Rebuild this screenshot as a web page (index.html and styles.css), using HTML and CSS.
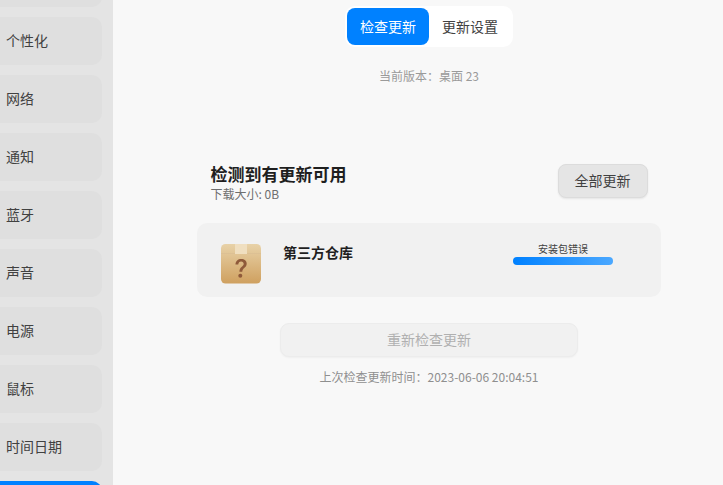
FILE: index.html
```html
<!DOCTYPE html>
<html lang="zh-CN">
<head>
  <meta charset="UTF-8">
  <title>系统更新</title>
  <link rel="stylesheet" href="styles.css">
</head>
<body>
  <div class="app">
    <div class="sidebar">
      <div class="nav-item"></div>
      <div class="nav-item">个性化</div>
      <div class="nav-item">网络</div>
      <div class="nav-item">通知</div>
      <div class="nav-item">蓝牙</div>
      <div class="nav-item">声音</div>
      <div class="nav-item">电源</div>
      <div class="nav-item">鼠标</div>
      <div class="nav-item">时间日期</div>
      <div class="nav-item active"></div>
    </div>
    <div class="main">
      <div class="tabs">
        <div class="tab active">检查更新</div>
        <div class="tab">更新设置</div>
      </div>
      <div class="version">当前版本：桌面 23</div>
      <div class="update-head">
        <div>
          <div class="update-title">检测到有更新可用</div>
          <div class="update-size">下载大小: 0B</div>
        </div>
        <button class="btn-all">全部更新</button>
      </div>
      <div class="card">
        <svg class="pkg-icon" width="42" height="42" viewBox="0 0 42 42">
          <defs>
            <linearGradient id="box" x1="0" y1="0" x2="0" y2="1">
              <stop offset="0" stop-color="#e8d2a8"/>
              <stop offset="1" stop-color="#cfa05f"/>
            </linearGradient>
          </defs>
          <rect x="1" y="1" width="40" height="39.500" rx="4.500" fill="url(#box)"/>
          <rect x="1" y="10" width="40" height="1" fill="#dcc094"/>
          <rect x="15" y="1" width="12" height="10" fill="#f0dfc0"/>
          <path d="M15.500 21.500c0-3.500 2.500-5.500 5.700-5.500 3.300 0 5.500 2 5.500 4.800 0 4-4.400 4.200-4.400 7.900h-2.900c0-5 4.300-5.300 4.300-7.800 0-1.300-1-2.300-2.600-2.300-1.700 0-2.700 1-2.800 2.900z" fill="#8f5a3a"/>
          <circle cx="20.300" cy="32.800" r="2" fill="#8f5a3a"/>
        </svg>
        <div class="pkg-name">第三方仓库</div>
        <div class="pkg-status">
          <div class="status-text">安装包错误</div>
          <div class="progress"></div>
        </div>
      </div>
      <button class="btn-recheck">重新检查更新</button>
      <div class="last-check">上次检查更新时间：2023-06-06 20:04:51</div>
    </div>
  </div>
</body>
</html>
```

FILE: styles.css
```css
html, body { margin: 0; padding: 0; height: 100%; overflow: hidden; }
body { font-family: "Noto Sans CJK SC", "Noto Sans", sans-serif; background: #f8f8f8; color: #333; }
.app { display: flex; height: 485px; overflow: hidden; }

.sidebar { width: 113px; flex: none; background: #e4e4e4; display: flex; flex-direction: column; gap: 10px; margin-top: -41px; }
.nav-item { flex: none; height: 48px; width: 122px; margin-left: -20px; padding-left: 26px; box-sizing: border-box; border-radius: 10px; background: #dfdfdf; font-size: 14px; line-height: 46px; color: #414141; }
.nav-item.active { background: #0081ff; }

.main { width: 632px; flex: none; display: flex; flex-direction: column; align-items: center; background: #f8f8f8; padding-top: 6px; }

.tabs { display: flex; height: 41px; width: 168px; box-sizing: border-box; padding: 2px; background: #fff; border-radius: 10px; }
.tab { width: 82px; height: 37px; line-height: 37px; text-align: center; font-size: 14px; color: #414141; border-radius: 8px; }
.tab.active { background: #0081ff; color: #fff; }

.version { margin-top: 20px; font-size: 12px; line-height: 18px; color: #9a9a9a; }

.update-head { margin-top: 79px; width: 437px; height: 34px; display: flex; justify-content: space-between; align-items: flex-start; }
.update-title { font-size: 17px; font-weight: 700; line-height: 20px; color: #1f1f1f; }
.update-size { font-size: 12px; line-height: 20px; color: #6e6e6e; }
.btn-all { width: 90px; height: 34px; padding: 0 0 2px; border: 1px solid #dcdcdc; border-radius: 8px; background: #e5e5e5; font: inherit; font-size: 14px; color: #414141; box-shadow: 0 1px 2px rgba(0,0,0,0.08); }

.card { margin-top: 25px; width: 464px; height: 74px; box-sizing: border-box; padding: 20px 48px 0 23px; display: flex; align-items: flex-start; background: #f1f1f1; border-radius: 10px; }
.pkg-icon { flex: none; display: block; }
.pkg-name { margin-left: 21px; font-size: 14px; font-weight: 700; line-height: 18px; color: #1f1f1f; }
.pkg-status { margin-left: auto; width: 100px; margin-top: -2px; text-align: center; }
.status-text { font-size: 10px; line-height: 15px; color: #414141; }
.progress { height: 8px; margin-top: 1px; border-radius: 4px; background: linear-gradient(90deg, #0081ff, #4ba8ff); }

.btn-recheck { margin-top: 26px; width: 298px; height: 34px; padding: 0 0 2px; border: 1px solid #ececec; border-radius: 9px; background: #f1f1f1; font: inherit; font-size: 14px; color: #b0b0b0; box-shadow: 0 1px 2px rgba(0,0,0,0.04); }

.last-check { margin-top: 11px; font-size: 12px; line-height: 18px; color: #8f8f8f; }
```
